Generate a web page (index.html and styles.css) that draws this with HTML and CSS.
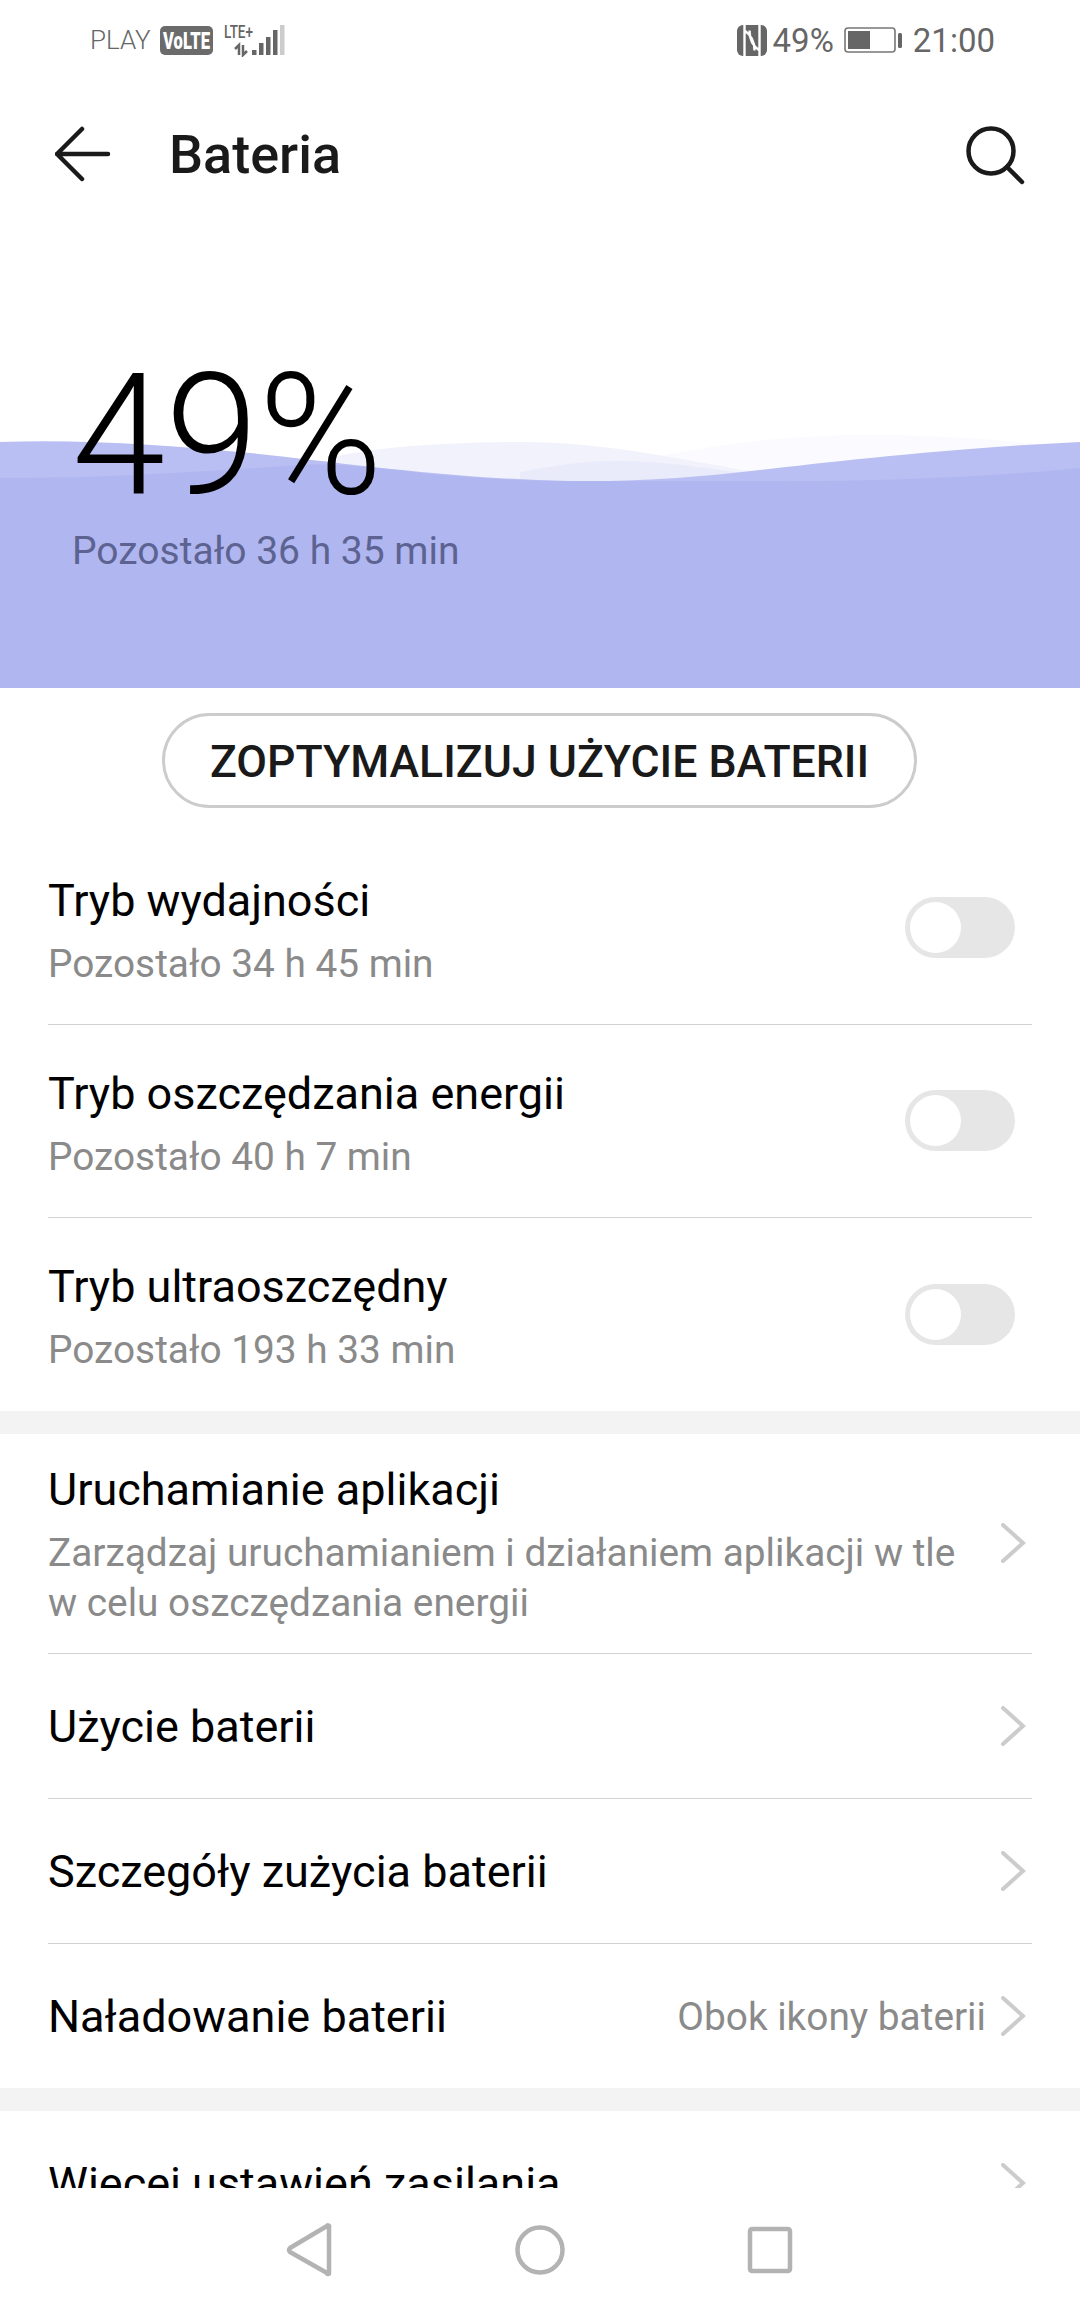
FILE: index.html
```html
<!DOCTYPE html>
<html lang="pl">
  <head>
    <meta charset="utf-8">
    <title>Bateria</title>
    <link rel="stylesheet" href="styles.css">
  </head>

  <body>
    <div class="screen">
      <div class="status">
        <div class="status-left">
          <span class="carrier">PLAY</span>
          <svg width="53" height="29" viewBox="0 0 53 29">
            <rect width="53" height="29" rx="5" fill="#6b6b6b"/>
            <text class="volte" x="3" y="23" textLength="47" lengthAdjust="spacingAndGlyphs">VoLTE</text>
          </svg>
          <svg class="signal" width="62" height="34" viewBox="0 0 62 34">
            <text class="lte" x="0" y="15" textLength="29" lengthAdjust="spacingAndGlyphs">LTE+</text>
            <path d="M15 32V22L11 26M19 22V32L23 28" fill="none" stroke="#666" stroke-width="2.5"/>
            <rect x="28" y="27" width="4.5" height="5" fill="#666"/>
            <rect x="35" y="20" width="4.5" height="12" fill="#666"/>
            <rect x="42" y="14" width="4.5" height="18" fill="#666"/>
            <rect x="49" y="7" width="4.5" height="25" fill="#666"/>
            <rect x="56" y="2" width="4.5" height="30" fill="#ccc"/>
          </svg>
        </div>
        <div class="status-right">
          <svg width="30" height="31" viewBox="0 0 30 31">
            <rect width="30" height="31" rx="6" fill="#666"/>
            <path d="M7.5 0v31M22.5 0v31M7.5 5.5c6 4 10 11 10 20M22.5 25.5c-6-4-10-11-10-20" fill="none" stroke="#fff" stroke-width="2.4"/>
          </svg>
          <span class="percent">49%</span>
          <svg class="battery" width="58" height="26" viewBox="0 0 58 26">
            <rect x="1" y="1" width="50" height="24" rx="3" fill="none" stroke="#777" stroke-width="1.6"/>
            <rect x="4" y="4" width="22" height="18" fill="#666"/>
            <rect x="54" y="6" width="4" height="15" rx="1.5" fill="#666"/>
          </svg>
          <span class="time">21:00</span>
        </div>
      </div>

      <div class="toolbar">
        <svg class="back" width="56" height="56" viewBox="0 0 56 56">
          <path d="M27 3 2 28l25 25M2 28h51" fill="none" stroke="#1a1a1a" stroke-width="4.5" stroke-linecap="round" stroke-linejoin="round"/>
        </svg>
        <h1>Bateria</h1>
        <svg class="search" width="64" height="64" viewBox="0 0 64 64">
          <circle cx="29" cy="29" r="22.5" fill="none" stroke="#1a1a1a" stroke-width="4.5"/>
          <path d="M45 45l15 15" fill="none" stroke="#1a1a1a" stroke-width="4.5" stroke-linecap="round"/>
        </svg>
      </div>

      <div class="hero">
        <svg class="waves" viewBox="0 0 1080 270" preserveAspectRatio="none">
          <path d="M660 38C720 26 790 17 868 17C930 17 1010 20 1080 33V70H660Z" fill="#fbfbff"/>
          <path d="M330 40C370 30 440 24 530 24C620 26 680 42 790 60V70H330Z" fill="#f1f2fc"/>
          <path d="M520 54C560 46 590 43 620 43C670 44 710 50 770 60V70H520Z" fill="#e9ebfa"/>
          <path d="M0 24C80 21 170 27 250 35C340 44 440 60 570 63C640 64 700 59 760 52C830 44 950 30 1080 24V270H0Z" fill="#b9bff2"/>
          <path d="M0 60C90 61 200 54 300 47C340 45 380 50 430 56C490 61 530 63 570 63H760C860 64 980 60 1080 50V270H0Z" fill="#b0b6f0"/>
        </svg>
        <div class="level">49%</div>
        <div class="remaining">Pozostało 36 h 35 min</div>
      </div>

      <div class="scroll">
        <div class="optimize">ZOPTYMALIZUJ UŻYCIE BATERII</div>

        <div class="group">
          <div class="row mode">
            <div class="text">
              <div class="title">Tryb wydajności</div>
              <div class="sub">Pozostało 34 h 45 min</div>
            </div>
            <div class="switch"></div>
          </div>
          <div class="row mode">
            <div class="text">
              <div class="title">Tryb oszczędzania energii</div>
              <div class="sub">Pozostało 40 h 7 min</div>
            </div>
            <div class="switch"></div>
          </div>
          <div class="row mode last">
            <div class="text">
              <div class="title">Tryb ultraoszczędny</div>
              <div class="sub">Pozostało 193 h 33 min</div>
            </div>
            <div class="switch"></div>
          </div>
        </div>

        <div class="band"></div>

        <div class="group">
          <div class="row wide">
            <div class="text">
              <div class="title">Uruchamianie aplikacji</div>
              <div class="sub">Zarządzaj uruchamianiem i działaniem aplikacji w tle<br>w celu oszczędzania energii</div>
            </div>
            <svg class="chevron" width="32" height="40" viewBox="0 0 32 40"><path d="M3 2l20 18L3 38" /></svg>
          </div>
          <div class="row single">
            <div class="title">Użycie baterii</div>
            <svg class="chevron" width="32" height="40" viewBox="0 0 32 40"><path d="M3 2l20 18L3 38" /></svg>
          </div>
          <div class="row single">
            <div class="title">Szczegóły zużycia baterii</div>
            <svg class="chevron" width="32" height="40" viewBox="0 0 32 40"><path d="M3 2l20 18L3 38" /></svg>
          </div>
          <div class="row single last">
            <div class="title">Naładowanie baterii</div>
            <div class="value">Obok ikony baterii</div>
            <svg class="chevron" width="32" height="40" viewBox="0 0 32 40"><path d="M3 2l20 18L3 38" /></svg>
          </div>
        </div>

        <div class="band"></div>

        <div class="group">
          <div class="row single last">
            <div class="title">Więcej ustawień zasilania</div>
            <svg class="chevron" width="32" height="40" viewBox="0 0 32 40"><path d="M3 2l20 18L3 38" /></svg>
          </div>
        </div>
      </div>

      <div class="nav">
        <div class="nav-item">
          <svg width="60" height="60" viewBox="0 0 60 60"><path d="M49 7v46a1 1 0 0 1-2 0L10 32a3 3 0 0 1 0-4L47 6a1 1 0 0 1 2 1Z"/></svg>
        </div>
        <div class="nav-item">
          <svg width="60" height="60" viewBox="0 0 60 60"><circle cx="30" cy="30" r="22.5"/></svg>
        </div>
        <div class="nav-item">
          <svg width="60" height="60" viewBox="0 0 60 60"><rect x="10" y="9" width="40" height="42" rx="2"/></svg>
        </div>
      </div>
    </div>
  </body>
</html>
```

FILE: styles.css
```css
/* general styling */
* {
  box-sizing: border-box;
  margin: 0;
  padding: 0;
}

html,
body {
  height: 100%;
  margin: 0;
}

body {
  background-color: #fff;
  font-family: Roboto, "Noto Sans", sans-serif;
  overflow: hidden;
}

.screen {
  display: flex;
  flex-direction: column;
  height: 2312px;
  width: 1080px;
}

/* status bar */
.status {
  align-items: center;
  color: #666;
  display: flex;
  flex: none;
  height: 80px;
  justify-content: space-between;
  padding: 0 85px 0 90px;
}

.status-left,
.status-right {
  align-items: center;
  display: flex;
}

.carrier {
  font-size: 26px;
  font-weight: 300;
  margin-right: 9px;
}

.volte {
  fill: #fff;
  font-size: 23px;
  font-weight: 900;
}

.signal {
  margin-left: 11px;
}

.lte {
  fill: #666;
  font-size: 19px;
  font-weight: 500;
}

.percent,
.time {
  font-size: 33px;
}

.percent {
  margin-left: 6px;
}

.battery {
  margin-left: 10px;
}

.time {
  margin-left: 11px;
}

/* top bar */
.toolbar {
  align-items: center;
  display: flex;
  flex: none;
  height: 148px;
  padding: 0 54px 0 55px;
}

.toolbar h1 {
  color: #1a1a1a;
  flex: 1;
  font-size: 54px;
  font-weight: 500;
  margin-left: 58px;
}

/* battery level */
.hero {
  flex: none;
  height: 460px;
  padding: 124px 0 0 72px;
  position: relative;
}

.waves {
  bottom: 0;
  height: 270px;
  left: 0;
  position: absolute;
  width: 1080px;
}

.level,
.remaining {
  position: relative;
}

.level {
  color: #000;
  font-size: 168px;
  font-weight: 300;
  line-height: 168px;
}

.remaining {
  color: #5d6390;
  font-size: 39px;
  line-height: 50px;
  margin-top: 6px;
}

/* scrolling part */
.scroll {
  flex: 1;
  min-height: 0;
  overflow: hidden;
}

.optimize {
  border: 3px solid #ccc;
  border-radius: 48px;
  color: #1a1a1a;
  font-size: 44.6px;
  font-weight: 500;
  height: 95px;
  line-height: 92px;
  margin: 25px 0 24px 162px;
  text-align: center;
  width: 755px;
}

.group {
  padding: 0 48px;
}

.row {
  align-items: center;
  border-bottom: 1px solid #d2d2d2;
  display: flex;
  justify-content: space-between;
}

.row.last {
  border-bottom: none;
}

.mode {
  height: 193px;
  padding: 3px 0 0;
}

.wide {
  height: 220px;
  padding: 1px 0 0;
}

.single {
  height: 145px;
  padding: 2px 0 0;
}

.single.last {
  height: 144px;
}

.text {
  flex: 1;
}

.title {
  color: #000;
  flex: 1;
  font-size: 45px;
  line-height: 60px;
}

.sub,
.value {
  color: #8a8a8a;
  font-size: 38.8px;
  line-height: 50px;
}

.sub {
  margin-top: 8px;
}

.value {
  margin-right: 10px;
}

.switch {
  background-color: #e6e6e6;
  border-radius: 31px;
  flex: none;
  height: 61px;
  margin-bottom: 4px;
  margin-right: 17px;
  padding: 5px;
  width: 110px;
}

.switch::before {
  background-color: #fff;
  border-radius: 50%;
  content: "";
  display: block;
  height: 51px;
  width: 51px;
}

.chevron {
  flex: none;
  margin-bottom: 2px;
  margin-left: 4px;
}

.chevron path {
  fill: none;
  stroke: #ccc;
  stroke-linecap: round;
  stroke-width: 4;
}

.band {
  background-color: #f3f3f3;
  height: 23px;
}

/* system navigation */
.nav {
  align-items: center;
  background-color: #fff;
  display: flex;
  flex: none;
  height: 124px;
  justify-content: center;
}

.nav-item {
  display: flex;
  justify-content: center;
  width: 230px;
}

.nav-item svg * {
  fill: none;
  stroke: #b3b3b3;
  stroke-linejoin: round;
  stroke-width: 4.5;
}
```
